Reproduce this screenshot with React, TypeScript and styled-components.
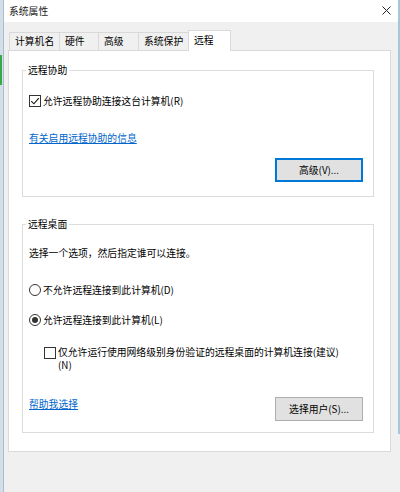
import React from "react";
import styled, { createGlobalStyle } from "styled-components";

const Global = createGlobalStyle`
  html, body { margin: 0; padding: 0; background: #f0f0f0; }
  body {
    font-family: "Noto Sans CJK SC", "Microsoft YaHei", sans-serif;
    font-size: 9.8px;
    color: #000;
  }
  * { box-sizing: border-box; }
`;

const Desktop = styled.div`
  display: flex;
  width: 400px;
  height: 492px;
  overflow: hidden;
`;

const LeftStrip = styled.div`
  width: 3px;
  background: #d5dee6;
  display: flex;
  flex-direction: column;
  padding-top: 55px;
`;

const GreenMark = styled.div`
  width: 2px;
  height: 30px;
  background: #3aa845;
`;

const Window = styled.div`
  flex: 1;
  display: flex;
  flex-direction: column;
  border-left: 1px solid #a3bfd6;
  background: #f0f0f0;
`;

const RightFrame = styled.div`
  width: 2px;
  background: linear-gradient(#a6c6de 0 434px, #f0f0f0 434px);
`;

const TitleBar = styled.div`
  height: 22px;
  flex: none;
  background: #fff;
  display: flex;
  align-items: center;
  justify-content: space-between;
  padding: 0 7px 1px 5px;
`;

const Title = styled.span`
  line-height: 14px;
  color: #1a1a1a;
`;

const CloseIcon = styled.svg`
  display: block;
  width: 9px;
  height: 9px;
`;

const Body = styled.div`
  flex: 1;
  display: flex;
  flex-direction: column;
  padding: 8px 7px 0 4px;
`;

const TabRow = styled.div`
  display: flex;
  align-items: flex-end;
  height: 21px;
  padding-left: 1px;
  margin-bottom: -1px;
  position: relative;
  z-index: 1;
`;

const Tab = styled.div<{ $w: number; $active?: boolean }>`
  width: ${(p) => p.$w}px;
  height: ${(p) => (p.$active ? 21 : 18)}px;
  margin-bottom: ${(p) => (p.$active ? 0 : 1)}px;
  display: flex;
  align-items: center;
  padding: 0 0 ${(p) => (p.$active ? 2 : 1)}px 5px;
  border: 1px solid #d9d9d9;
  border-bottom: none;
  background: ${(p) => (p.$active ? "#fff" : "#f0f0f0")};
  line-height: 14px;
  & + & { margin-left: -1px; }
`;

const Panel = styled.div`
  height: 402px;
  background: #fff;
  border: 1px solid #d9d9d9;
  padding: 12px 16px 0 13px;
  display: flex;
  flex-direction: column;
`;

const Group = styled.fieldset<{ $mt?: number; $pb: number }>`
  margin: ${(p) => p.$mt ?? 0}px 0 0 0;
  min-width: 0;
  border: 1px solid #dcdcdc;
  padding: 0 10px ${(p) => p.$pb}px 6px;
  display: flex;
  flex-direction: column;
`;

const Legend = styled.legend`
  margin-left: -3px;
  padding: 0 2px;
  line-height: 14px;
`;

const Row = styled.div<{ $mt: number; $indent?: number }>`
  display: flex;
  align-items: center;
  margin-top: ${(p) => p.$mt}px;
  padding-left: ${(p) => p.$indent ?? 0}px;
  line-height: 14px;
`;

const WrapRow = styled.div<{ $mt: number; $indent?: number }>`
  display: flex;
  align-items: flex-start;
  margin-top: ${(p) => p.$mt}px;
  padding-left: ${(p) => p.$indent ?? 0}px;
  line-height: 12.5px;
`;

const Text = styled.div<{ $mt: number }>`
  margin-top: ${(p) => p.$mt}px;
  line-height: 14px;
`;

const Box = styled.span<{ $top?: number }>`
  flex: none;
  width: 12px;
  height: 12px;
  margin: ${(p) => p.$top ?? 0}px 2px 0 0;
  border: 1px solid #333;
  background: #fff;
  display: flex;
  align-items: center;
  justify-content: center;
`;

const Radio = styled.span`
  flex: none;
  width: 12px;
  height: 12px;
  margin-right: 2px;
  border: 1px solid #333;
  border-radius: 50%;
  background: #fff;
  display: flex;
  align-items: center;
  justify-content: center;
`;

const RadioDot = styled.span`
  width: 6px;
  height: 6px;
  border-radius: 50%;
  background: #333;
`;

const Link = styled.a<{ $mt?: number }>`
  display: block;
  margin-top: ${(p) => p.$mt ?? 0}px;
  color: #0066cc;
  text-decoration: underline;
  line-height: 14px;
  cursor: pointer;
  align-self: flex-start;
`;

const ButtonRow = styled.div<{ $mt: number; $between?: boolean }>`
  display: flex;
  align-items: center;
  justify-content: ${(p) => (p.$between ? "space-between" : "flex-end")};
  margin-top: ${(p) => p.$mt}px;
`;

const Button = styled.button<{ $primary?: boolean }>`
  width: 88px;
  height: 24px;
  padding: 0;
  font: inherit;
  color: #000;
  line-height: 14px;
  background: #e1e1e1;
  border: ${(p) => (p.$primary ? "2px solid #0078d7" : "1px solid #adadad")};
`;

const CheckMark = () => (
  <svg width="10" height="10" viewBox="0 0 10 10">
    <path d="M1.3 5.2 L3.9 7.8 L8.8 2.2" fill="none" stroke="#111" strokeWidth="1.1" />
  </svg>
);

export default function App() {
  return (
    <>
      <Global />
      <Desktop>
        <LeftStrip>
          <GreenMark />
        </LeftStrip>
        <Window>
          <TitleBar>
            <Title>系统属性</Title>
            <CloseIcon viewBox="0 0 9 9">
              <path d="M0.5 0.5 L8.5 8.5 M8.5 0.5 L0.5 8.5" stroke="#222" strokeWidth="1" />
            </CloseIcon>
          </TitleBar>
          <Body>
            <TabRow>
              <Tab $w={51}>计算机名</Tab>
              <Tab $w={40}>硬件</Tab>
              <Tab $w={41}>高级</Tab>
              <Tab $w={51}>系统保护</Tab>
              <Tab $w={43} $active>远程</Tab>
            </TabRow>
            <Panel>
              <Group $pb={14}>
                <Legend>远程协助</Legend>
                <Row $mt={17}>
                  <Box>
                    <CheckMark />
                  </Box>
                  允许远程协助连接这台计算机(R)
                </Row>
                <Link $mt={23}>有关启用远程协助的信息</Link>
                <ButtonRow $mt={13}>
                  <Button $primary>高级(V)...</Button>
                </ButtonRow>
              </Group>
              <Group $mt={20} $pb={11}>
                <Legend>远程桌面</Legend>
                <Text $mt={15}>选择一个选项，然后指定谁可以连接。</Text>
                <Row $mt={23}>
                  <Radio />
                  不允许远程连接到此计算机(D)
                </Row>
                <Row $mt={16}>
                  <Radio>
                    <RadioDot />
                  </Radio>
                  允许远程连接到此计算机(L)
                </Row>
                <WrapRow $mt={19} $indent={15}>
                  <Box $top={1} />
                  <span>
                    仅允许运行使用网络级别身份验证的远程桌面的计算机连接(建议)
                    <br />
                    (N)
                  </span>
                </WrapRow>
                <ButtonRow $mt={26} $between>
                  <Link>帮助我选择</Link>
                  <Button>选择用户(S)...</Button>
                </ButtonRow>
              </Group>
            </Panel>
          </Body>
        </Window>
        <RightFrame />
      </Desktop>
    </>
  );
}
